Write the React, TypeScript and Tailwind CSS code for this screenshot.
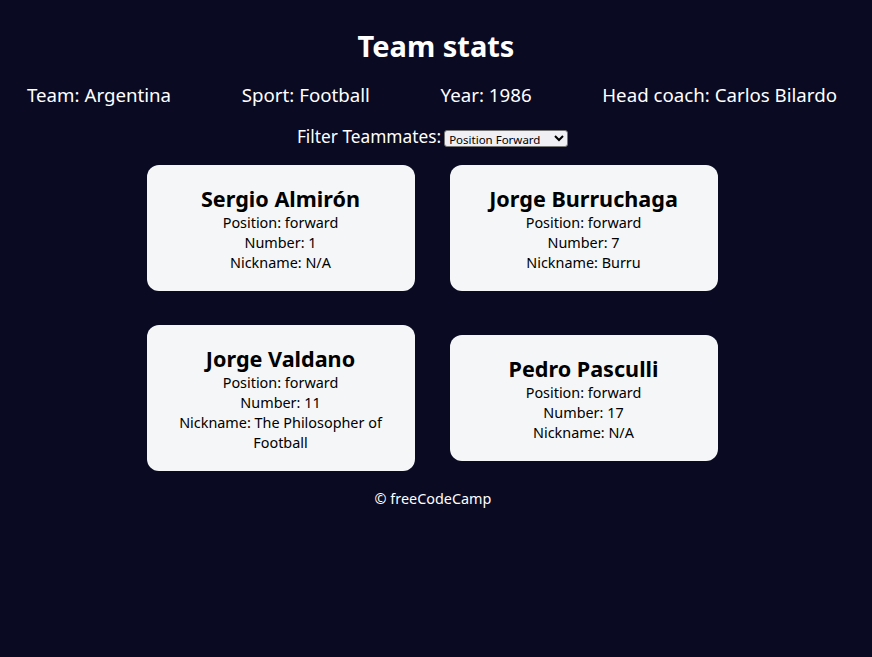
import { useState } from "react"

type Player = {
  name: string
  position: string
  number: number
  nickname: string | null
}

const players: Player[] = [
  { name: "Sergio Almirón", position: "forward", number: 1, nickname: null },
  { name: "Jorge Burruchaga", position: "forward", number: 7, nickname: "Burru" },
  { name: "Jorge Valdano", position: "forward", number: 11, nickname: "The Philosopher of Football" },
  { name: "Pedro Pasculli", position: "forward", number: 17, nickname: null },
]

function PlayerCard({ player }: { player: Player }) {
  return (
    <div className="w-[268px] bg-[#f5f6f7] rounded-[12px] px-[20px] pt-[19px] pb-[18px] text-black text-center">
      <h2 className="text-[21.6px] leading-[29px] font-bold">{player.name}</h2>
      <p className="text-[14.4px] leading-[20px]">Position: {player.position}</p>
      <p className="text-[14.4px] leading-[20px]">Number: {player.number}</p>
      <p className="text-[14.4px] leading-[20px]">Nickname: {player.nickname ?? "N/A"}</p>
    </div>
  )
}

export default function App() {
  const [filter, setFilter] = useState("forward")

  return (
    <div
      className="min-h-[657px] bg-[#0a0a23] text-white text-center"
      style={{ fontFamily: "'Noto Sans', sans-serif" }}
    >
      <h1 className="pt-[28px] text-[29px] leading-[36px] font-bold">Team stats</h1>
      <div className="mt-[18px] flex justify-between pl-[27px] pr-[35px] text-[18.7px] leading-[26px]">
        <p>Team: Argentina</p>
        <p>Sport: Football</p>
        <p>Year: 1986</p>
        <p>Head coach: Carlos Bilardo</p>
      </div>
      <div className="mt-[16px] flex items-center justify-center gap-[3px] pr-[7px] text-[17.3px] leading-[26px]">
        <label htmlFor="players">Filter Teammates:</label>
        <select
          id="players"
          value={filter}
          onChange={(e) => setFilter(e.target.value)}
          className="mt-[2px] w-[124px] h-[17px] text-[11.5px] leading-[14px] bg-[#efeff4] text-black border border-[#767676] rounded-[3px]"
        >
          <option value="all">All Players</option>
          <option value="nickname">Nicknames</option>
          <option value="forward">Position Forward</option>
          <option value="midfielder">Position Midfielder</option>
          <option value="defender">Position Defender</option>
          <option value="goalkeeper">Position Goalkeeper</option>
        </select>
      </div>
      <div className="mt-[15px] flex justify-center pr-[8px]">
        <div className="grid grid-cols-[268px_268px] gap-x-[35px] gap-y-[34px] items-center">
          {players.map((p) => (
            <PlayerCard key={p.number} player={p} />
          ))}
        </div>
      </div>
      <footer className="mt-[17px] pr-[6px] text-[14.4px] leading-[22px]">© freeCodeCamp</footer>
    </div>
  )
}
